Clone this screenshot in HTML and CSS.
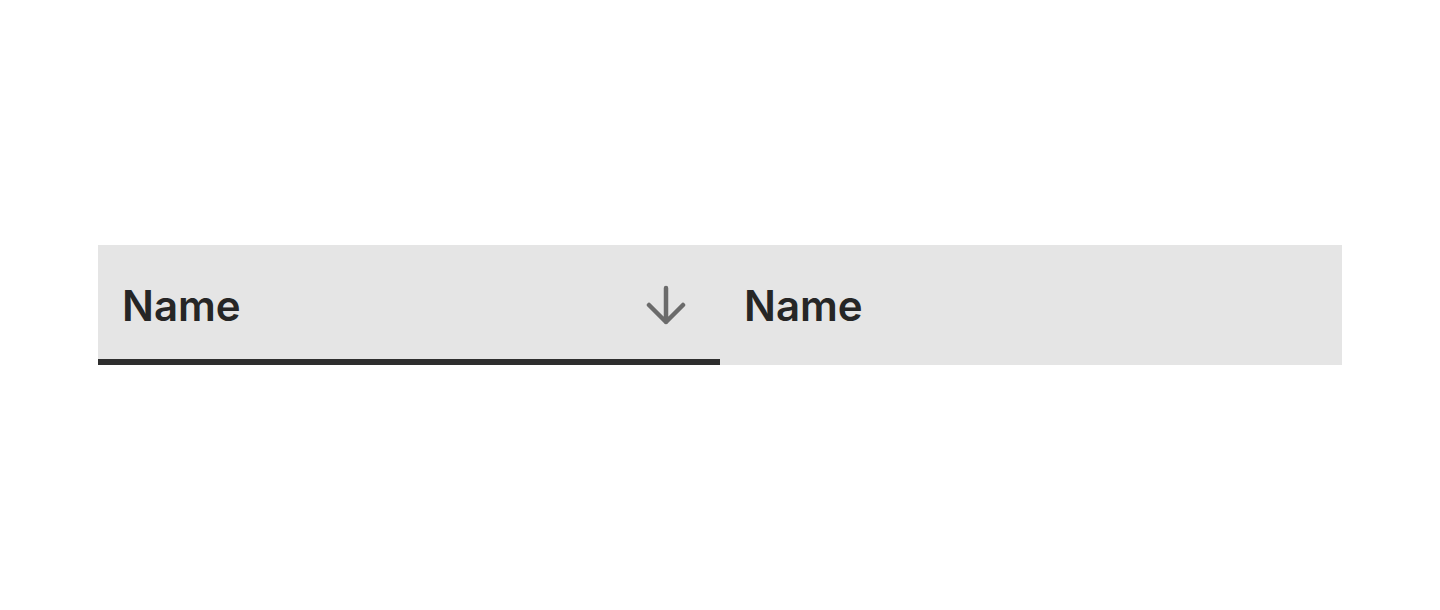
FILE: index.html
```html
<!DOCTYPE html>
<html lang="en">
<head>
  <meta charset="UTF-8">
  <meta name="viewport" content="width=device-width, initial-scale=1.0">
  <title>Table header</title>
  <link rel="stylesheet" href="styles.css">
</head>
<body>
  <div class="table-head">
    <div class="head-cell sorted">
      <span class="label">Name</span>
      <svg class="sort-icon" width="40" height="40" viewBox="0 0 40 40" aria-hidden="true">
        <path d="M20 3 V37 M3 20 L20 37 L37 20" fill="none" stroke="#6b6b6b" stroke-width="4.5" stroke-linecap="round" stroke-linejoin="round"/>
      </svg>
    </div>
    <div class="head-cell">
      <span class="label">Name</span>
    </div>
  </div>
</body>
</html>
```

FILE: styles.css
```css
body {
  margin: 0;
  background-color: #ffffff;
  font-family: Inter, "Noto Sans", sans-serif;
}
.table-head {
  display: flex;
  width: 1244px;
  margin: 245px 0 0 98px;
  background-color: #e5e5e5;
}
.head-cell {
  flex: 1;
  height: 120px;
  box-sizing: border-box;
  padding: 0 34px 0 24px;
  display: flex;
  align-items: center;
  justify-content: space-between;
}
.head-cell.sorted {
  box-shadow: inset 0 -6px 0 #2e2e2e;
}
.label {
  font-size: 42px;
  font-weight: 600;
  color: #262626;
}
.sort-icon {
  display: block;
}
```
